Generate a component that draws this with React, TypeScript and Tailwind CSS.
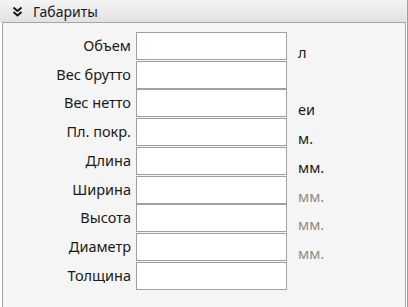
const rows = [
  { label: 'Объем', unit: 'л', muted: false, pitch: 'h-[29px]' },
  { label: 'Вес брутто', unit: '', muted: false, pitch: 'h-[28px]' },
  { label: 'Вес нетто', unit: 'еи', muted: false, pitch: 'h-[29px]' },
  { label: 'Пл. покр.', unit: 'м.', muted: false, pitch: 'h-[29px]' },
  { label: 'Длина', unit: 'мм.', muted: false, pitch: 'h-[29px]' },
  { label: 'Ширина', unit: 'мм.', muted: true, pitch: 'h-[28px]' },
  { label: 'Высота', unit: 'мм.', muted: true, pitch: 'h-[29px]' },
  { label: 'Диаметр', unit: 'мм.', muted: true, pitch: 'h-[29px]' },
  { label: 'Толщина', unit: '', muted: false, pitch: 'h-[28px]' },
]

function ChevronsDown() {
  return (
    <svg width="11" height="11" viewBox="0 0 11 11" className="shrink-0">
      <path d="M1.5 1.5 L5.5 5 L9.5 1.5" fill="none" stroke="#111" strokeWidth="1.9" />
      <path d="M1.5 6 L5.5 9.5 L9.5 6" fill="none" stroke="#111" strokeWidth="1.9" />
    </svg>
  )
}

export default function App() {
  return (
    <div className="flex h-[307px] w-[408px] flex-col overflow-hidden border-r border-r-[#a0a0a0] bg-white font-['Noto_Sans',sans-serif] text-[#1a1a1a]">
      <div className="flex h-[22px] shrink-0 items-center gap-[10px] bg-gradient-to-b from-[#f4f4f4] to-[#e2e2e2] pl-[12px] pt-[1px]">
        <ChevronsDown />
        <span className="text-[14px] leading-none">Габариты</span>
      </div>
      <div className="ml-[2px] mr-[1px] flex-1 border-x border-t border-[#a6a6a6] bg-[#f5f5f5] pt-[9px]">
        {rows.map((row) => (
          <div key={row.label} className={`flex ${row.pitch}`}>
            <div className="flex h-[28px] w-[128px] items-center justify-end text-[14.5px]">
              {row.label}
            </div>
            <div className="ml-[5px] h-[28px] w-[151px] border border-[#a0a0a0] bg-white" />
            <div
              className={`ml-[11px] mt-[12px] text-[14.5px] leading-[16px] ${
                row.muted ? 'text-[#8c8c8c]' : 'text-[#1a1a1a]'
              }`}
            >
              {row.unit}
            </div>
          </div>
        ))}
      </div>
    </div>
  )
}
